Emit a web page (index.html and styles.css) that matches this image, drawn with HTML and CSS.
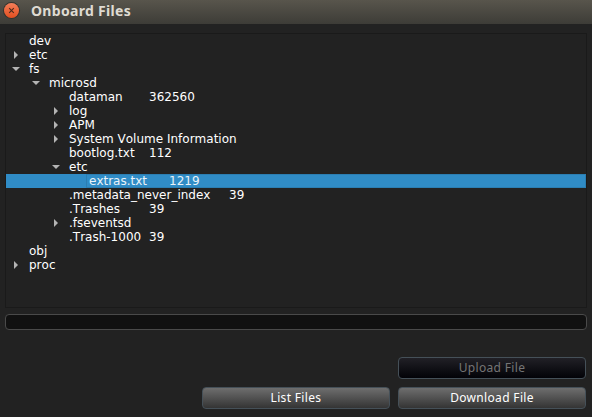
FILE: index.html
```html
<!DOCTYPE html>
<html lang="en">
<head>
<meta charset="utf-8">
<title>Onboard Files</title>
<link rel="stylesheet" href="styles.css">
</head>
<body>
<header class="titlebar">
  <button class="close" aria-label="Close"><svg width="15" height="15" viewBox="0 0 15 15"><path d="M5.2 5.2l4.6 4.6M9.8 5.2l-4.6 4.6" stroke="#4b2a1c" stroke-width="1.1"/></svg></button>
  <h1 class="title">Onboard Files</h1>
</header>
<main class="content">
  <div class="tree">
    <div class="row l1"><span>dev</span></div>
    <div class="row l1 closed"><span>etc</span></div>
    <div class="row l1 open"><span>fs</span></div>
    <div class="row l2 open"><span>microsd</span></div>
    <div class="row l3"><span class="name">dataman</span><span>362560</span></div>
    <div class="row l3 closed"><span>log</span></div>
    <div class="row l3 closed"><span>APM</span></div>
    <div class="row l3 closed"><span>System Volume Information</span></div>
    <div class="row l3"><span class="name">bootlog.txt</span><span>112</span></div>
    <div class="row l3 open"><span>etc</span></div>
    <div class="row l4 selected"><span class="name">extras.txt</span><span>1219</span></div>
    <div class="row l3"><span class="name long">.metadata_never_index</span><span>39</span></div>
    <div class="row l3"><span class="name">.Trashes</span><span>39</span></div>
    <div class="row l3 closed"><span>.fseventsd</span></div>
    <div class="row l3"><span class="name">.Trash-1000</span><span>39</span></div>
    <div class="row l1"><span>obj</span></div>
    <div class="row l1 closed"><span>proc</span></div>
  </div>
  <div class="progress"></div>
  <div class="actions">
    <button class="btn upload" disabled><span class="label">Upload File</span></button>
    <button class="btn list"><span class="label">List Files</span></button>
    <button class="btn download"><span class="label">Download File</span></button>
  </div>
</main>
</body>
</html>
```
FILE: styles.css
```css
* { box-sizing: border-box; }
body {
  margin: 0;
  width: 592px;
  height: 417px;
  overflow: hidden;
  background: #222;
  color: #fff;
  font: 12px/14px "DejaVu Sans", sans-serif;
  font-kerning: none;
}
.titlebar {
  display: flex;
  align-items: center;
  height: 24px;
  padding: 0 4px 3px;
  background: linear-gradient(#58554c, #3d3c37);
}
.close {
  width: 15px;
  height: 15px;
  padding: 0;
  border: 0;
  border-radius: 50%;
  background: linear-gradient(#f37e59, #e34f20);
  box-shadow: 0 0 0 1px #35332e;
}
.close svg { display: block; }
.title {
  margin: 0 0 0 12px;
  font: bold 14px/20px "Noto Sans", sans-serif;
  letter-spacing: .3px;
  color: #dfdbd2;
}
.content { padding: 9px 5px 0; }
.tree {
  height: 275px;
  border: 1px solid #1a1a1a;
}
.row {
  position: relative;
  display: flex;
  height: 14px;
  white-space: nowrap;
}
.l1 { padding-left: 23px; }
.l2 { padding-left: 43px; }
.l3 { padding-left: 63px; }
.l4 { padding-left: 83px; }
.name { width: 80px; }
.name.long { width: 160px; }
.closed::before, .open::before {
  content: "";
  flex: none;
  background: #b4b4b4;
}
.closed::before {
  width: 4px;
  height: 8px;
  margin: 3px 11px 0 -15px;
  clip-path: polygon(0 0, 100% 50%, 0 100%);
}
.open::before {
  width: 8px;
  height: 4px;
  margin: 5px 9px 0 -17px;
  clip-path: polygon(0 0, 100% 0, 50% 100%);
}
.selected { background: #308cc6; color: #eaf3f9; }
.selected::after {
  content: "";
  position: absolute;
  inset: 0 0 0 80px;
  border: 1px solid #2b7eb2;
}
.selected span { position: relative; z-index: 1; }
.progress {
  height: 16px;
  margin-top: 6px;
  border: 1px solid #4a4a4a;
  border-radius: 4px;
  background: #111;
}
.actions {
  display: grid;
  grid-template-columns: 188px 188px;
  grid-template-rows: 22px 22px;
  gap: 8px;
  justify-content: end;
  padding-right: 1px;
  margin-top: 27px;
}
.btn {
  padding: 0;
  border: 1px solid #455058;
  border-radius: 4px;
  background: linear-gradient(#6e6e6e, #343434);
  color: #fff;
  font: 12px/18px "Noto Sans", sans-serif;
  letter-spacing: .33px;
}
.upload {
  grid-column: 2;
  background: linear-gradient(#212026, #020207);
  color: #757575;
}
```
